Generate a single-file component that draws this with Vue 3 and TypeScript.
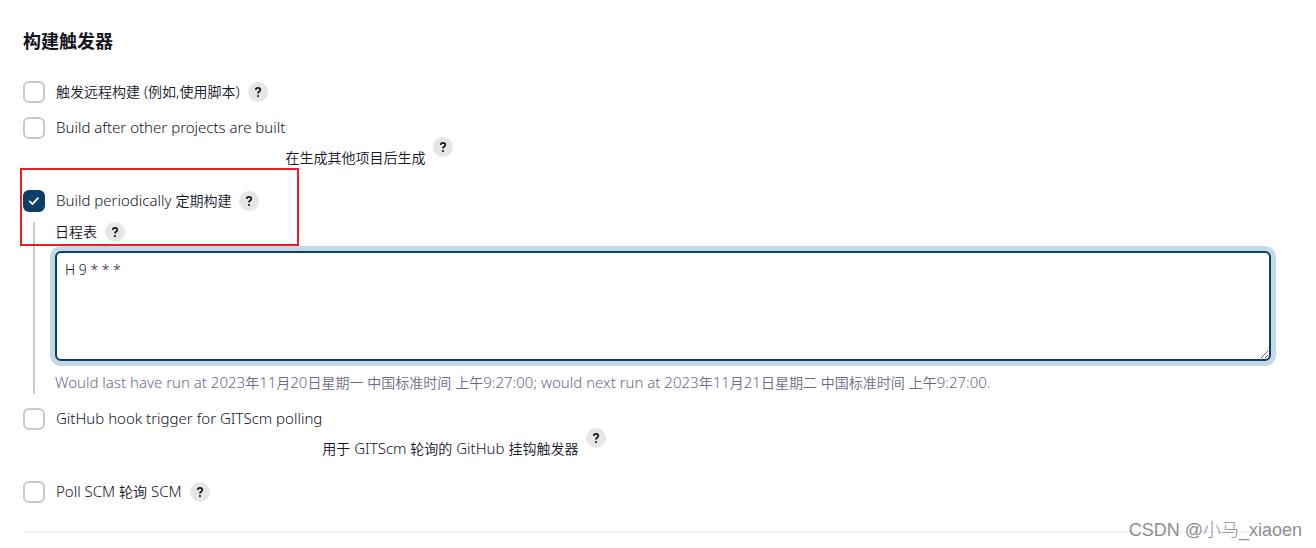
<script setup lang="ts">
import { h, ref } from 'vue'
import type { FunctionalComponent } from 'vue'

interface Trigger {
  id: string
  label: string
  note?: string
  help: string
}

const before: Trigger[] = [
  { id: 'remote', label: '触发远程构建 (例如,使用脚本)', help: '触发远程构建' },
  { id: 'upstream', label: 'Build after other projects are built', note: '在生成其他项目后生成', help: 'Build after other projects are built' },
]
const after: Trigger[] = [
  { id: 'github', label: 'GitHub hook trigger for GITScm polling', note: '用于 GITScm 轮询的 GitHub 挂钩触发器', help: 'GitHub hook trigger' },
  { id: 'scm', label: 'Poll SCM 轮询 SCM', help: 'Poll SCM' },
]
const hint = 'Would last have run at 2023年11月20日星期一 中国标准时间 上午9:27:00; would next run at 2023年11月21日星期二 中国标准时间 上午9:27:00.'

// Latin runs are set one size larger than the Chinese text around them.
const MixedText: FunctionalComponent<{ text: string }> = ({ text }) =>
  (text.match(/[\x20-\x7e]+|[^\x20-\x7e]+/g) ?? []).map((run) =>
    h('span', { class: /^[\x20-\x7e]/.test(run) ? 'latin' : 'han' }, run),
  )
MixedText.props = ['text']

const selected = ref<string[]>(['timer'])
const schedule = ref('H 9 * * *')
</script>

<template>
  <main class="page">
    <h2 class="title">构建触发器</h2>

    <div class="triggers">
      <div v-for="t in before" :key="t.id" class="row" :class="{ tall: t.note }">
        <input :id="t.id" v-model="selected" class="check" type="checkbox" :value="t.id" />
        <label class="label" :for="t.id"><MixedText :text="t.label" /></label>
        <span v-if="t.note" class="note"><MixedText :text="t.note" /></span>
        <button class="help" type="button" :aria-label="t.help">
          <svg viewBox="0 0 20 20" aria-hidden="true"><path d="M7.7 7.9C7.8 6.6 8.7 5.8 10 5.8s2.3.8 2.3 2c0 1-.6 1.5-1.3 2-.7.5-1 .9-1 1.7" /><circle cx="10" cy="14" r="1.1" /></svg>
        </button>
      </div>

      <section class="periodic">
        <div class="row">
          <input id="timer" v-model="selected" class="check" type="checkbox" value="timer" />
          <label class="label" for="timer"><MixedText text="Build periodically 定期构建" /></label>
          <button class="help" type="button" aria-label="Build periodically">
            <svg viewBox="0 0 20 20" aria-hidden="true"><path d="M7.7 7.9C7.8 6.6 8.7 5.8 10 5.8s2.3.8 2.3 2c0 1-.6 1.5-1.3 2-.7.5-1 .9-1 1.7" /><circle cx="10" cy="14" r="1.1" /></svg>
          </button>
        </div>
        <div class="nested">
          <div class="field-head">
            <label for="schedule">日程表</label>
            <button class="help" type="button" aria-label="日程表">
              <svg viewBox="0 0 20 20" aria-hidden="true"><path d="M7.7 7.9C7.8 6.6 8.7 5.8 10 5.8s2.3.8 2.3 2c0 1-.6 1.5-1.3 2-.7.5-1 .9-1 1.7" /><circle cx="10" cy="14" r="1.1" /></svg>
            </button>
          </div>
          <textarea id="schedule" v-model="schedule" class="schedule" rows="4" spellcheck="false"></textarea>
          <p class="hint"><MixedText :text="hint" /></p>
        </div>
        <div class="marker"></div>
      </section>

      <div v-for="t in after" :key="t.id" class="row" :class="{ tall: t.note }">
        <input :id="t.id" v-model="selected" class="check" type="checkbox" :value="t.id" />
        <label class="label" :for="t.id"><MixedText :text="t.label" /></label>
        <span v-if="t.note" class="note"><MixedText :text="t.note" /></span>
        <button class="help" type="button" :aria-label="t.help">
          <svg viewBox="0 0 20 20" aria-hidden="true"><path d="M7.7 7.9C7.8 6.6 8.7 5.8 10 5.8s2.3.8 2.3 2c0 1-.6 1.5-1.3 2-.7.5-1 .9-1 1.7" /><circle cx="10" cy="14" r="1.1" /></svg>
        </button>
      </div>
    </div>

    <hr class="divider" />
    <span class="watermark">CSDN @小马_xiaoen</span>
  </main>
</template>

<style>
body {
  margin: 0;
  background: #fff;
}
</style>

<style scoped>
.page {
  position: relative;
  box-sizing: border-box;
  min-height: 100vh;
  padding: 27px 45px 0 23px;
  color: #14141f;
  font-family: "Noto Sans", "Noto Sans CJK SC", sans-serif;
  font-size: 14px;
  font-weight: 350;
  line-height: 22px;
}

.page :deep(.latin) {
  font-size: 15px;
  line-height: 20px;
}

.title {
  margin: 0 0 26px;
  font-size: 18px;
  font-weight: 700;
  line-height: 28px;
}

.triggers {
  display: flex;
  flex-direction: column;
  gap: 14px;
}

.row {
  display: flex;
  align-items: flex-start;
  min-height: 22px;
}

.row.tall {
  min-height: 59px;
}

.check {
  appearance: none;
  flex: none;
  box-sizing: border-box;
  width: 22px;
  height: 22px;
  margin: 0 11px 0 0;
  border: 2px solid #c3cdd1;
  border-radius: 6px;
  background: #fff;
}

.check:checked {
  border-color: #0b3f63;
  background: #0b3f63 url("data:image/svg+xml,%3Csvg xmlns='http://www.w3.org/2000/svg' viewBox='0 0 18 18'%3E%3Cpath d='M4.8 9.4l2.7 2.7 5.4-6' fill='none' stroke='white' stroke-width='1.8' stroke-linecap='round' stroke-linejoin='round'/%3E%3C/svg%3E") center / 18px 18px no-repeat;
}

.label,
.note {
  white-space: nowrap;
}

.note {
  margin-top: 30px;
}

.help {
  flex: none;
  width: 20px;
  height: 20px;
  margin: 1px 0 0 8px;
  padding: 0;
  border: 0;
  border-radius: 50%;
  background: #e6e6e6;
}

.tall .help {
  margin-top: 20px;
}

.help svg {
  display: block;
  width: 20px;
  height: 20px;
}

.help path {
  fill: none;
  stroke: #14141f;
  stroke-width: 1.7;
}

.help circle {
  fill: #14141f;
}

.periodic {
  position: relative;
}

.nested {
  margin: 10px 0 0 10px;
  padding-left: 20px;
  border-left: 2px solid #c3cdd1;
}

.field-head {
  display: flex;
  align-items: center;
  height: 20px;
  margin-bottom: 9px;
}

.field-head .help {
  margin-top: 0;
}

.schedule {
  display: block;
  box-sizing: border-box;
  width: 100%;
  height: 110px;
  margin: 0;
  padding: 6px 8px;
  border: 2px solid #0b3f63;
  border-radius: 6px;
  outline: 0;
  background: #fff;
  box-shadow: 0 0 0 5px #c2d9e6;
  color: inherit;
  font: inherit;
  resize: vertical;
}

.hint {
  margin: 11px 0 0;
  color: #6a6a85;
}

.marker {
  position: absolute;
  top: -22px;
  left: -3px;
  box-sizing: border-box;
  width: 279px;
  height: 78px;
  border: 2px solid #ee1c25;
  pointer-events: none;
}

.divider {
  height: 2px;
  margin: 28px 0 0;
  border: 0;
  background: #f3f3f6;
}

.watermark {
  position: absolute;
  right: 14px;
  bottom: 6px;
  color: #8e8e8e;
  font-family: "Liberation Sans", "Noto Sans CJK SC", sans-serif;
  font-size: 18px;
  font-weight: 300;
  line-height: 24px;
}
</style>
